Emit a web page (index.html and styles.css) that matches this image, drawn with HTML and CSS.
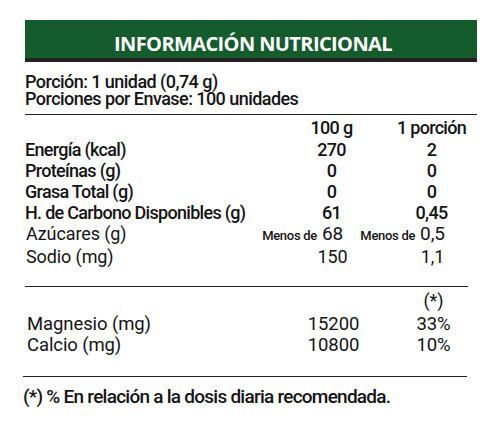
FILE: index.html
```html
<!DOCTYPE html>
<html lang="es">
<head>
<meta charset="utf-8">
<title>Información Nutricional</title>
<link rel="stylesheet" href="styles.css">
</head>
<body>
<div class="label">
  <div class="title">INFORMACIÓN NUTRICIONAL</div>
  <div class="serving">
    <div class="line">Porción: 1 unidad (0,74 g)</div>
    <div class="line">Porciones por Envase: 100 unidades</div>
  </div>
  <div class="table">
    <div class="row head"><span></span><span class="v">100 g</span><span class="v">1 porción</span></div>
    <div class="row"><span>Energía (kcal)</span><span class="v">270</span><span class="v">2</span></div>
    <div class="row"><span>Proteínas (g)</span><span class="v">0</span><span class="v">0</span></div>
    <div class="row"><span>Grasa Total (g)</span><span class="v">0</span><span class="v">0</span></div>
    <div class="row"><span>H. de Carbono Disponibles (g)</span><span class="v">61</span><span class="v">0,45</span></div>
    <div class="row wide"><span>Azúcares (g)</span><span class="v pre"><em>Menos de</em><b>68</b></span><span class="v pre"><em>Menos de</em><b>0,5</b></span></div>
    <div class="row wide"><span>Sodio (mg)</span><span class="v">150</span><span class="v">1,1</span></div>
  </div>
  <div class="minerals">
    <div class="row wide star"><span></span><span class="v"></span><span class="v">(*)</span></div>
    <div class="row wide"><span>Magnesio (mg)</span><span class="v">15200</span><span class="v">33%</span></div>
    <div class="row wide"><span>Calcio (mg)</span><span class="v">10800</span><span class="v">10%</span></div>
  </div>
  <div class="note">(*) % En relación a la dosis diaria recomendada.</div>
</div>
</body>
</html>
```
FILE: styles.css
```css
html, body {
  margin: 0;
  padding: 0;
  background: #ffffff;
}
body {
  font-family: Roboto, "Liberation Sans", sans-serif;
  color: #141414;
}
.label {
  width: 452px;
  margin: 20px 0 0 25px;
}
.title {
  height: 42px;
  box-sizing: border-box;
  padding-top: 9px;
  background: #155c2c;
  border-bottom: 4px solid #222222;
  color: #ffffff;
  font-family: "Open Sans", sans-serif;
  font-weight: 700;
  font-size: 20px;
  line-height: 30px;
  text-align: center;
  letter-spacing: -0.6px;
  padding-left: 4px;
}
.serving {
  padding-top: 10.5px;
  padding-bottom: 7px;
  border-bottom: 1.5px solid #222222;
}
.serving .line {
  font-size: 18px;
  line-height: 17px;
  font-weight: 500;
  letter-spacing: -0.55px;
}
.table {
  padding-top: 1px;
  padding-bottom: 19px;
  border-bottom: 1.5px solid #222222;
  width: 443px;
}
.row {
  display: grid;
  grid-template-columns: 256px 101px 99px;
  font-size: 18px;
  font-weight: 500;
  line-height: 21px;
  letter-spacing: -0.7px;
}
.row.head {
  line-height: 23.5px;
}
.row.wide {
  font-weight: 400;
  letter-spacing: -0.1px;
  padding-left: 1px;
}
.v {
  text-align: center;
}
.v.pre {
  display: grid;
  grid-template-columns: minmax(0, 1fr) auto minmax(0, 1fr);
  align-items: baseline;
}
.v.pre em {
  font-style: normal;
  font-weight: 500;
  font-size: 13px;
  letter-spacing: -0.3px;
  justify-self: end;
  white-space: nowrap;
  margin-right: 5px;
}
.v.pre b {
  font-weight: 400;
  font-size: 19px;
}
.minerals {
  padding-top: 0;
  padding-bottom: 20px;
  border-bottom: 1.5px solid #222222;
  width: 444px;
  margin-left: -2px;
}
.minerals .row {
  padding-left: 4px;
  font-size: 18.5px;
}
.minerals .row.star {
  line-height: 27px;
  font-size: 18px;
}
.note {
  font-size: 19px;
  line-height: 22px;
  padding-top: 9px;
  margin-left: -2px;
  letter-spacing: -0.75px;
  font-weight: 500;
}
```
